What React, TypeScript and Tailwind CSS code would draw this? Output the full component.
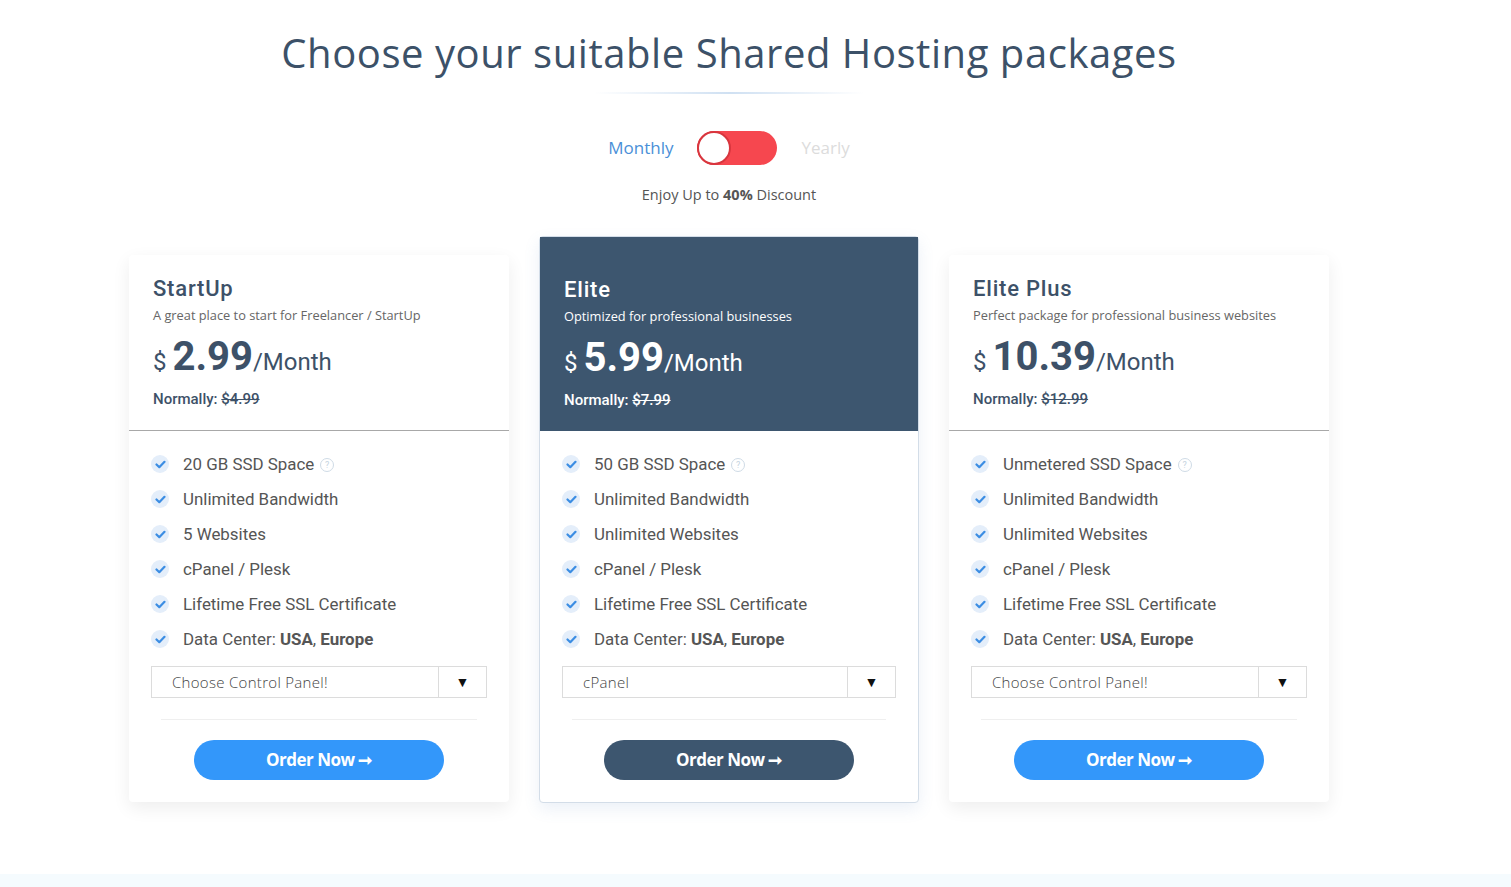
import React from "react";

type Plan = {
  name: string;
  desc: string;
  price: string;
  normal: string;
  space: string;
  sites: string;
  select: string;
  featured?: boolean;
};

const plans: Plan[] = [
  { name: "StartUp", desc: "A great place to start for Freelancer / StartUp", price: "2.99", normal: "$4.99", space: "20 GB SSD Space", sites: "5 Websites", select: "Choose Control Panel!" },
  { name: "Elite", desc: "Optimized for professional businesses", price: "5.99", normal: "$7.99", space: "50 GB SSD Space", sites: "Unlimited Websites", select: "cPanel", featured: true },
  { name: "Elite Plus", desc: "Perfect package for professional business websites", price: "10.39", normal: "$12.99", space: "Unmetered SSD Space", sites: "Unlimited Websites", select: "Choose Control Panel!" },
];

const mont = { fontFamily: '"Open Sans", "Noto Sans", sans-serif' };
const rob = { fontFamily: 'Roboto, "Noto Sans", sans-serif' };

function Check() {
  return (
    <span className="flex h-[18px] w-[18px] shrink-0 items-center justify-center rounded-full bg-[#e4eefa]">
      <svg width="11" height="9" viewBox="0 0 11 9" fill="none">
        <path d="M1.5 4.5 L4.3 7.2 L9.5 1.8" stroke="#3b8de3" strokeWidth="2.2" strokeLinecap="round" strokeLinejoin="round" />
      </svg>
    </span>
  );
}

function Feature({ children, help }: { children: React.ReactNode; help?: boolean }) {
  return (
    <li className="flex h-[35px] items-center">
      <Check />
      <span className="ml-[14px] text-[16.9px] text-[#555]" style={rob}>
        {children}
      </span>
      {help && (
        <span className="ml-[6px] mt-[2px] flex h-[14px] w-[14px] items-center justify-center rounded-full border border-[#cfdbe6] text-[9px] leading-none text-[#c5d3e0]" style={rob}>
          ?
        </span>
      )}
    </li>
  );
}

function Card({ p }: { p: Plan }) {
  const f = !!p.featured;
  return (
    <div
      className={
        "flex w-[380px] flex-col rounded-[4px] bg-white " +
        (f
          ? "border border-[#d3dde8] shadow-[0_6px_16px_rgba(90,130,190,0.12)]"
          : "mt-[19px] shadow-[0_6px_18px_rgba(0,0,0,0.07)]")
      }
    >
      <div
        className={
          "flex flex-col pl-[24px] pr-[20px] pb-[22px] " +
          (f ? "bg-[#3d566f] pt-[40px] text-white" : "border-b border-[#a8a8a8] pt-[21px] text-[#3d5168]")
        }
      >
        <div className="text-[22px] font-medium leading-[26px] tracking-[0.8px]" style={rob}>
          {p.name}
        </div>
        <div className={"mt-[5px] text-[12.8px] leading-[16px] " + (f ? "text-white" : "text-[#666]")} style={mont}>
          {p.desc}
        </div>
        <div className="mt-[12px] flex items-baseline" style={rob}>
          <span className="text-[24px] leading-none">$</span>
          <span className="ml-[6px] text-[40px] font-bold leading-[44px]">{p.price}</span>
          <span className="text-[24px] leading-none">/Month</span>
        </div>
        <div className="mt-[11px] text-[15px] font-medium leading-[18px]" style={rob}>
          Normally: <span className="line-through">{p.normal}</span>
        </div>
      </div>
      <div className="flex flex-col px-[22px] pb-[22px] pt-[16px]">
        <ul className="flex flex-col">
          <Feature help>{p.space}</Feature>
          <Feature>Unlimited Bandwidth</Feature>
          <Feature>{p.sites}</Feature>
          <Feature>cPanel / Plesk</Feature>
          <Feature>Lifetime Free SSL Certificate</Feature>
          <Feature>
            Data Center: <b className="font-bold">USA</b>, <b className="font-bold">Europe</b>
          </Feature>
        </ul>
        <div className="mt-[9px] flex h-[32px] items-stretch border border-[#dcdcdc] bg-white">
          <div className="flex flex-1 items-center pl-[20px] text-[15px] font-light tracking-[0.3px] text-[#444]" style={mont}>
            {p.select}
          </div>
          <div className="flex w-[48px] items-center justify-center border-l border-[#dcdcdc] text-[14px] text-[#111]">
            ▼
          </div>
        </div>
        <div className="mx-[10px] mt-[21px] h-px bg-[#efefef]" />
        <button
          className={
            "mx-auto mt-[20px] flex h-[40px] w-[250px] items-center justify-center rounded-full text-[17px] font-bold tracking-[-0.5px] text-white " +
            (f ? "bg-[#3d566f]" : "bg-[#3397fa]")
          }
          style={mont}
        >
          Order Now ➞
        </button>
      </div>
    </div>
  );
}

export default function App() {
  return (
    <div className="min-h-[887px] bg-white">
      <div className="w-[1458px] pb-[71px] pt-[27px]">
        <div className="mx-auto flex w-[1200px] flex-col items-center">
          <h1 className="text-[40px] leading-[52px] tracking-[0.55px] text-[#3c5168]" style={mont}>
            Choose your suitable Shared Hosting packages
          </h1>
          <div className="mt-[13px] h-[2px] w-[270px] bg-[linear-gradient(90deg,rgba(200,220,240,0),#cfe0f2_50%,rgba(200,220,240,0))]" />
          <div className="mt-[37px] flex items-center">
            <span className="text-[17px] text-[#4a8fd8]" style={mont}>Monthly</span>
            <div className="mx-[24px] flex h-[34px] w-[80px] items-center rounded-full bg-[#f6474f]">
              <span className="h-[34px] w-[34px] rounded-full border-[2px] border-[#d8363e] bg-white" />
            </div>
            <span className="text-[17px] text-[#dcdcdc]" style={mont}>Yearly</span>
          </div>
          <div className="mt-[19px] text-[14.5px] text-[#555]" style={mont}>
            Enjoy Up to <b className="font-bold">40%</b> Discount
          </div>
          <div className="mt-[30px] flex w-full items-start justify-between">
            {plans.map((p) => (
              <Card key={p.name} p={p} />
            ))}
          </div>
        </div>
      </div>
      <div className="h-[20px] bg-[#f5fbfe]" />
    </div>
  );
}
